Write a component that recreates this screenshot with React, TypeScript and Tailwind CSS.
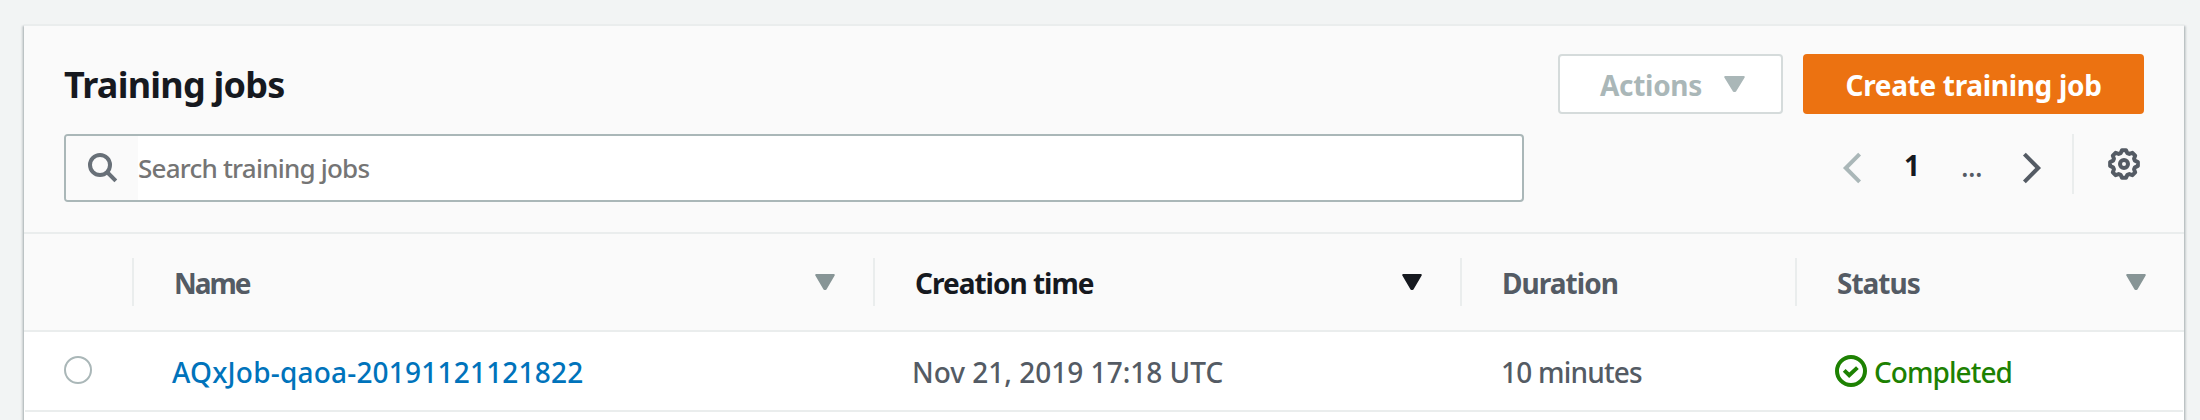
import type { ReactNode } from "react";

function Caret({ className }: { className: string }) {
  return (
    <svg className={`h-4 shrink-0 ${className}`} viewBox="0 0 20 16" preserveAspectRatio="none" fill="currentColor" stroke="currentColor" strokeWidth="2" strokeLinejoin="round">
      <path d="M1.2 1h17.6L10.6 15h-1.2z" />
    </svg>
  );
}

function SearchIcon() {
  return (
    <svg className="size-[30px]" viewBox="0 0 30 30" fill="none" stroke="#687078" strokeWidth="4">
      <circle cx="12" cy="12" r="10" />
      <path d="M18.5 18.5 27.8 27.8" />
    </svg>
  );
}

function Chevron({ direction, className }: { direction: "left" | "right"; className: string }) {
  return (
    <svg className={`mt-2 h-8 w-5 ${className}`} viewBox="0 0 20 32" fill="none" stroke="currentColor" strokeWidth="4">
      <path d={direction === "left" ? "M17.6 2.2 3.8 16l13.8 13.8" : "M2.4 2.2 16.2 16 2.4 29.8"} />
    </svg>
  );
}

function gearPoints() {
  const points: string[] = [];
  const add = (degrees: number, radius: number) => {
    const a = (degrees * Math.PI) / 180;
    points.push(`${(16 + radius * Math.sin(a)).toFixed(2)},${(16 - radius * Math.cos(a)).toFixed(2)}`);
  };
  for (let tooth = 0; tooth < 8; tooth++) {
    add(tooth * 45 - 8, 14);
    add(tooth * 45 + 8, 14);
    add(tooth * 45 + 17, 11.4);
    add(tooth * 45 + 28, 11.4);
  }
  return points.join(" ");
}

function GearIcon() {
  return (
    <svg className="size-8" viewBox="0 0 32 32" fill="none" stroke="#545b64" strokeWidth="4">
      <polygon points={gearPoints()} strokeLinejoin="round" />
      <circle cx="16" cy="16" r="4" />
    </svg>
  );
}

function CheckIcon() {
  return (
    <svg className="size-8 shrink-0" viewBox="0 0 32 32" fill="none" stroke="#1d8102" strokeWidth="4">
      <circle cx="16" cy="16" r="14" />
      <path d="m9.2 15.4 5 4.8 8.2-7.6" />
    </svg>
  );
}

function HeaderCell({ className, children, caret }: { className: string; children: ReactNode; caret?: string }) {
  return (
    <div className={`flex h-12 items-center justify-between border-[#eaeded] pr-[38px] pl-10 ${className}`}>
      <span className="pt-0.5">{children}</span>
      {caret && <Caret className={`w-5 ${caret}`} />}
    </div>
  );
}

export default function App() {
  return (
    <div className="h-[420px] w-[2200px] overflow-hidden bg-[#f2f4f4] px-6 pt-6 font-['Noto_Sans',sans-serif] text-[28px] whitespace-nowrap text-[#545b64]">
      <main className="h-[440px] w-[2160px] border-t-2 border-[#eaeded] bg-white shadow-[0_2px_2px_0_rgba(0,28,36,0.3),2px_2px_2px_0_rgba(0,28,36,0.15),-2px_2px_2px_0_rgba(0,28,36,0.15)]">
        <header className="h-[208px] border-b-2 border-[#eaeded] bg-[#fafafa] px-10 pt-7">
          <div className="flex h-[60px] items-center justify-between">
            <h1 className="pt-0.5 text-[36px] font-bold tracking-[-0.76px] text-[#16191f]">Training jobs</h1>
            <div className="flex gap-5 font-bold">
              <button className="flex h-[60px] w-[225px] items-center rounded-[4px] border-2 border-[#d5dbdb] bg-white pl-10 tracking-[-0.3px] text-[#aab7b8]">
                <span className="pt-0.5">Actions</span>
                <Caret className="ml-[22px] w-[21px]" />
              </button>
              <button className="h-[60px] w-[341px] rounded-[4px] bg-[#ec7211] pt-0.5 tracking-[-0.32px] text-white">
                Create training job
              </button>
            </div>
          </div>
          <div className="mt-5 flex justify-between">
            <div className="flex h-[68px] w-[1460px] items-stretch overflow-hidden rounded-[4px] border-2 border-[#aab7b8] bg-white">
              <div className="flex w-[72px] items-center bg-[#fafafa] pl-[22px]">
                <SearchIcon />
              </div>
              <span className="flex items-center text-[26px] font-medium tracking-[-0.78px] text-[#757575]">Search training jobs</span>
            </div>
            <nav className="flex h-[60px] items-center pr-1">
              <Chevron direction="left" className="text-[#aab7b8]" />
              <span className="ml-[42px] w-4 pt-0.5 font-bold text-[#16191f]">1</span>
              <span className="mt-1 ml-[41px] w-[23px] font-medium tracking-[-0.6px]">...</span>
              <Chevron direction="right" className="ml-[38px]" />
              <div className="mr-[34px] ml-[30px] h-[60px] w-0.5 bg-[#eaeded]" />
              <GearIcon />
            </nav>
          </div>
        </header>
        <div className="flex h-[98px] items-center border-b-2 border-[#eaeded] bg-[#fafafa] font-bold tracking-[-1px]">
          <div className="h-12 w-[110px] border-r-2 border-[#eaeded]" />
          <HeaderCell className="w-[741px] border-r-2 tracking-[-2px]" caret="text-[#879596]">Name</HeaderCell>
          <HeaderCell className="w-[587px] border-r-2 text-[#16191f]" caret="text-[#16191f]">Creation time</HeaderCell>
          <HeaderCell className="w-[335px] border-r-2 tracking-[-0.95px]">Duration</HeaderCell>
          <HeaderCell className="w-[387px] tracking-[-1px]" caret="text-[#879596]">Status</HeaderCell>
        </div>
        <div className="mx-px flex h-20 items-center border-b-2 border-[#eaeded]">
          <div className="w-[109px] pl-[39px]">
            <div className="mb-0.5 size-7 rounded-full border-2 border-[#aab7b8] bg-white" />
          </div>
          <div className="w-[741px] pt-0.5 pl-[38px] font-medium tracking-[0.2px] text-[#0073bb]">AQxJob-qaoa-20191121121822</div>
          <div className="w-[587px] pt-0.5 pl-[37px] font-medium">Nov 21, 2019 17:18 UTC</div>
          <div className="w-[335px] pt-0.5 pl-[39px] font-medium tracking-[-0.8px]">10 minutes</div>
          <div className="flex items-center gap-[7px] pl-[38px] text-[#1d8102]">
            <CheckIcon />
            <span className="pt-0.5 font-medium tracking-[-0.95px]">Completed</span>
          </div>
        </div>
      </main>
    </div>
  );
}
